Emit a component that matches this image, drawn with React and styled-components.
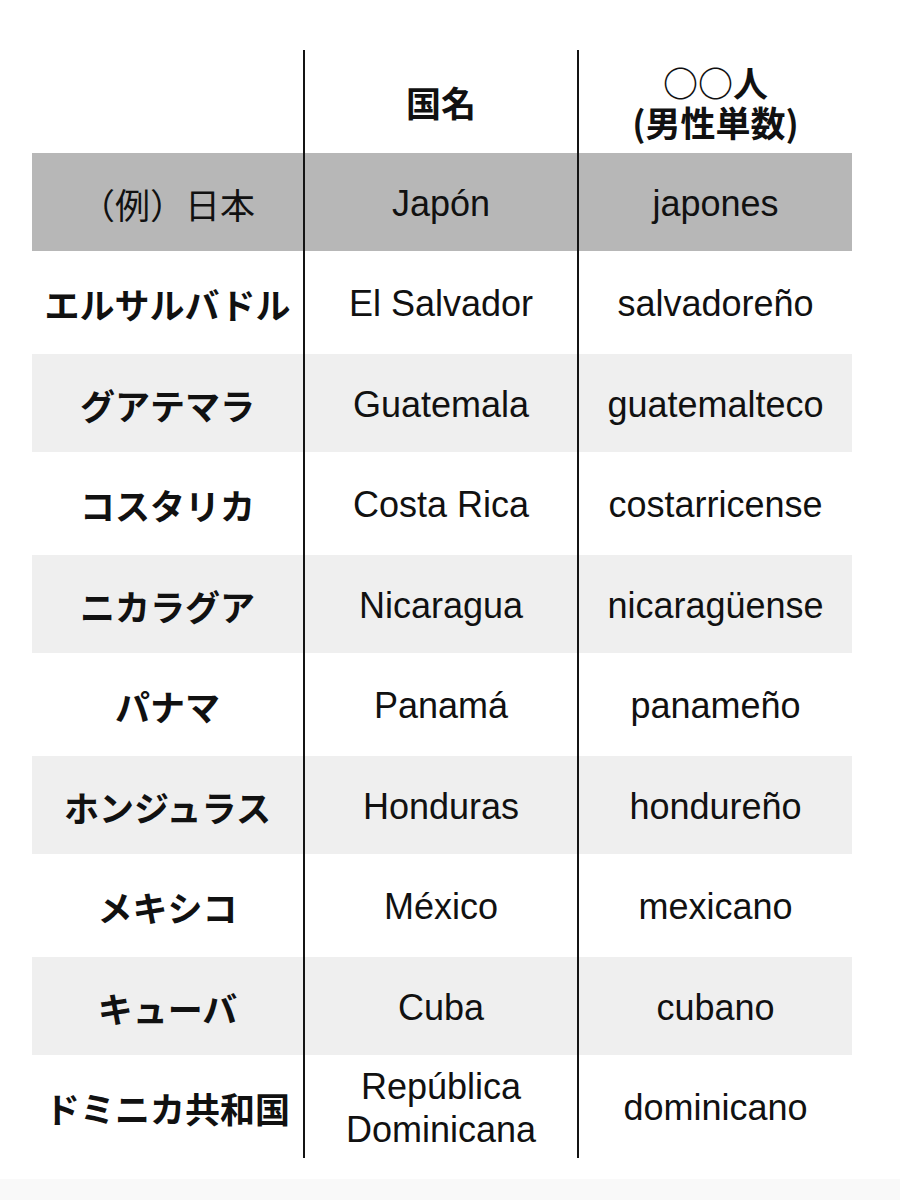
import React from "react";
import styled, { createGlobalStyle } from "styled-components";

const Global = createGlobalStyle`
  html, body { margin: 0; padding: 0; background: #ffffff; }
  body { font-family: "Liberation Sans", "Noto Sans CJK JP", sans-serif; color: #111; }
`;

const Page = styled.div`
  width: 900px;
  height: 1200px;
  display: flex;
  flex-direction: column;
  box-sizing: border-box;
  padding-top: 50px;
`;

const Table = styled.div`
  margin-left: 32px;
  width: 820px;
  display: grid;
  grid-template-columns: 271px 274px 275px;
`;

const Row = styled.div`
  display: contents;
`;

const Cell = styled.div`
  box-sizing: border-box;
  height: ${(p) => p.$h}px;
  display: flex;
  align-items: center;
  justify-content: center;
  text-align: center;
  border-left: ${(p) => (p.$line ? "2px solid #141414" : "none")};
  background: ${(p) =>
    p.$bg
      ? `linear-gradient(to bottom, ${p.$bg} calc(100% - 2.5px), transparent calc(100% - 2.5px))`
      : "transparent"};
  font-family: ${(p) =>
    p.$jp
      ? `"Noto Sans CJK JP", sans-serif`
      : `"Liberation Sans", "Noto Sans CJK JP", sans-serif`};
  font-weight: ${(p) => (p.$bold ? 700 : 400)};
  font-size: ${(p) => (p.$jp ? 35 : 36)}px;
  line-height: ${(p) => (p.$jp ? 1.12 : 1.2)};
  white-space: pre-line;
`;

const Footer = styled.div`
  margin-top: auto;
  height: 21px;
  background: #f9f9f9;
`;

const rows = [
  ["エルサルバドル", "El Salvador", "salvadoreño"],
  ["グアテマラ", "Guatemala", "guatemalteco"],
  ["コスタリカ", "Costa Rica", "costarricense"],
  ["ニカラグア", "Nicaragua", "nicaragüense"],
  ["パナマ", "Panamá", "panameño"],
  ["ホンジュラス", "Honduras", "hondureño"],
  ["メキシコ", "México", "mexicano"],
  ["キューバ", "Cuba", "cubano"],
  ["ドミニカ共和国", "República\nDominicana", "dominicano"],
];

export default function App() {
  return (
    <>
      <Global />
      <Page>
        <Table>
          <Row>
            <Cell $h={103} />
            <Cell $h={103} $line $jp $bold>国名</Cell>
            <Cell $h={103} $line $jp $bold>{"○○人\n(男性単数)"}</Cell>
          </Row>
          <Row>
            <Cell $h={100.5} $bg="#b7b7b7" $jp>（例）日本</Cell>
            <Cell $h={100.5} $bg="#b7b7b7" $line>Japón</Cell>
            <Cell $h={100.5} $bg="#b7b7b7" $line>japones</Cell>
          </Row>
          {rows.map((r, i) => {
            const bg = i % 2 === 1 ? "#efefef" : null;
            return (
              <Row key={r[0]}>
                <Cell $h={100.5} $bg={bg} $jp $bold>{r[0]}</Cell>
                <Cell $h={100.5} $bg={bg} $line>{r[1]}</Cell>
                <Cell $h={100.5} $bg={bg} $line>{r[2]}</Cell>
              </Row>
            );
          })}
        </Table>
        <Footer />
      </Page>
    </>
  );
}
